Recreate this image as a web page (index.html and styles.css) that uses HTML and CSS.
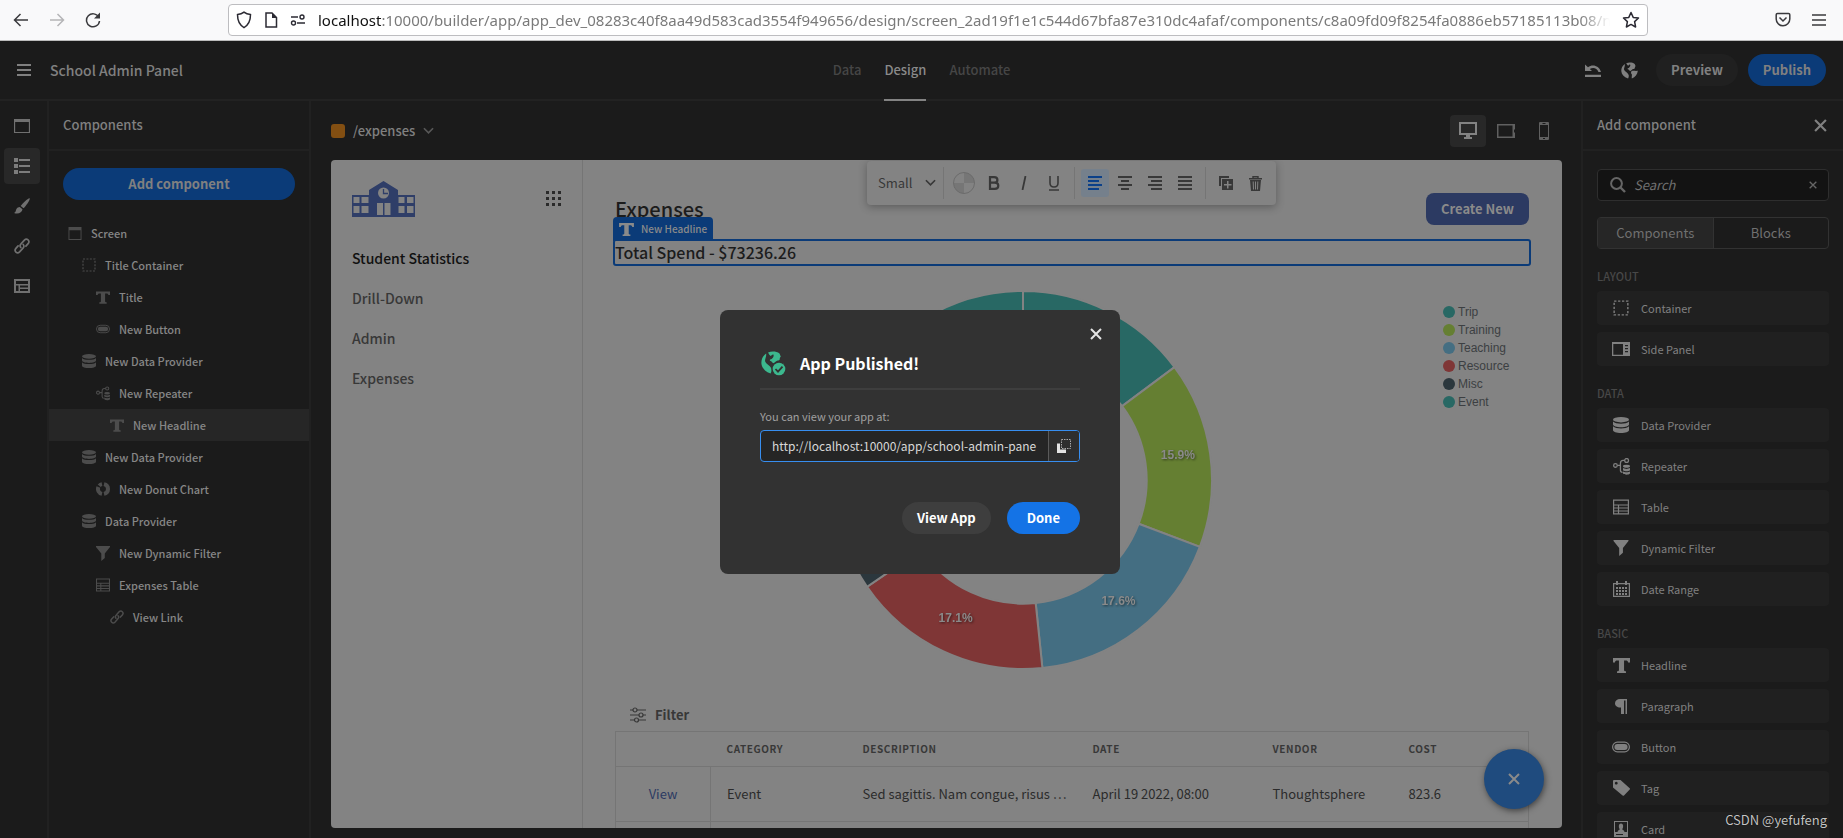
FILE: index.html
```html
<!DOCTYPE html>
<html lang="en">
<head>
<meta charset="utf-8">
<title>School Admin Panel</title>
<link rel="stylesheet" href="styles.css">
</head>
<body>
<svg class="sprite" aria-hidden="true">
  <symbol id="i-screen" viewBox="0 0 14 14"><path d="M0 0h14v14H0zM1 3.500v9.500h12V3.500z" fill="currentColor" fill-rule="evenodd"/></symbol>
  <symbol id="i-box" viewBox="0 0 14 14"><rect x="1" y="1" width="12" height="12" fill="none" stroke="currentColor" stroke-width="1.200" stroke-dasharray="2 1.430"/></symbol>
  <symbol id="i-text" viewBox="0 0 16 14"><path d="M0 0h16v4.200h-1.800C14 2.900 13.300 2.300 12 2.300h-1.600v8.900c0 .8.500 1.200 1.800 1.300V14H3.800v-1.500c1.300-.1 1.800-.5 1.800-1.300V2.300H4C2.700 2.300 2 2.900 1.800 4.200H0z" fill="currentColor"/></symbol>
  <symbol id="i-button" viewBox="0 0 18 12"><rect x=".6" y="1.200" width="16.800" height="9.600" rx="4.800" fill="none" stroke="currentColor" stroke-width="1.200"/><rect x="2.400" y="3" width="13.200" height="6" rx="3" fill="currentColor"/></symbol>
  <symbol id="i-data" viewBox="0 0 16 16"><g fill="currentColor"><ellipse cx="8" cy="2.700" rx="8" ry="2.700"/><path d="M0 4.500c1.500 1.700 4.500 2.200 8 2.200s6.500-.5 8-2.200v3c0 1.500-3.600 2.700-8 2.700S0 9 0 7.500zM0 9.300c1.500 1.700 4.500 2.200 8 2.200s6.500-.5 8-2.200v4c0 1.500-3.600 2.700-8 2.700s-8-1.200-8-2.700z"/></g></symbol>
  <symbol id="i-repeat" viewBox="0 0 16 16"><g fill="none" stroke="currentColor" stroke-width="1.200"><circle cx="2.300" cy="7" r="1.700"/><circle cx="12.800" cy="2.300" r="1.800"/><path d="M4 7h3M11 2.300H9.500Q7 2.300 7 5v6.500q0 2 2 2"/></g><g fill="currentColor"><ellipse cx="12.700" cy="7.800" rx="3.300" ry="1.400"/><path d="M9.400 9.500c1.500 1 5 1 6.600 0v2c-1.500 1.200-5 1.200-6.600 0zM9.400 12.600c1.500 1 5 1 6.600 0v2c-1.500 1.500-5 1.500-6.600 0z"/></g></symbol>
  <symbol id="i-donut" viewBox="0 0 14 14"><g fill="none" stroke="currentColor" stroke-width="4"><path d="M8 2.100a5 5 0 0 1 0 9.800"/><path d="M6 11.900A5 5 0 0 1 2.400 5"/><path d="M3.200 3.700A5 5 0 0 1 6 2.100"/></g></symbol>
  <symbol id="i-funnel" viewBox="0 0 14 15"><path d="M0 0h14v1L8.800 7.500V12L5.300 15V7.500L0 1z" fill="currentColor"/></symbol>
  <symbol id="i-table" viewBox="0 0 16 15"><path d="M.6.6h14.800v13.800H.6zM.6 5.500h14.800M.6 8.500h14.800M.6 11.500h14.800M5.500 5.500v9" fill="none" stroke="currentColor" stroke-width="1.200"/></symbol>
  <symbol id="i-link" viewBox="0 0 16 16"><g fill="none" stroke="currentColor" stroke-width="1.700" stroke-linecap="round"><path d="M6.800 9.500c-1-1.200-.8-2.600.2-3.600l3.400-3.800c2.500-2.400 6 .8 3.700 3.500l-2.200 2.500"/><path d="M9.200 6.500c1 1.200.8 2.600-.2 3.600l-3.400 3.800c-2.500 2.400-6-.8-3.700-3.500l2.200-2.500"/></g></symbol>
  <symbol id="i-panel" viewBox="0 0 18 14"><path d="M0 0h18v14H0zM1.300 2v10.700H11V2zM13 3v1.200h3V3zM13 6v1.200h3V6zM13 9v1.200h3V9z" fill="currentColor" fill-rule="evenodd"/></symbol>
  <symbol id="i-calendar" viewBox="0 0 17 16"><path d="M.6 2.600h15.800v12.800H.6z" fill="none" stroke="currentColor" stroke-width="1.200"/><path d="M4 0v4M13 0v4" stroke="currentColor" stroke-width="2"/><path d="M3 7h11M3 10h11M3 13h11" stroke="currentColor" stroke-width="2" stroke-dasharray="2 1"/></symbol>
  <symbol id="i-para" viewBox="0 0 12 15"><path d="M5 0h7v15h-1.500V1.500H9V15H6V8.500C2.500 8.800 0 7 0 4.300S2.200 0 5 0z" fill="currentColor"/></symbol>
  <symbol id="i-tag" viewBox="0 0 17 16"><path d="M0 1Q0 0 1 0h6.500l9.200 8.200q.6.700 0 1.300L11 15.500q-.7.600-1.400 0L0 7.500zM3.200 1.800a1.400 1.400 0 1 0 .1 0z" fill="currentColor" fill-rule="evenodd"/></symbol>
  <symbol id="i-card" viewBox="0 0 14 16"><path d="M0 0h14v16H0zM1 1v10h2.500C3.500 9.500 5.500 9 5.800 8.300 4.500 6.500 4.300 2.500 7 2.500s2.500 4 1.200 5.800C8.500 9 10.500 9.500 10.500 11H13V1zM2 13v1h7v-1z" fill="currentColor" fill-rule="evenodd"/></symbol>
  <symbol id="i-cross" viewBox="0 0 12 12"><path d="M1 1l10 10M11 1L1 11" fill="none" stroke="currentColor" stroke-width="2"/></symbol>
  <symbol id="i-chevron" viewBox="0 0 12 8"><path d="M1 1l5 5 5-5" fill="none" stroke="currentColor" stroke-width="1.800"/></symbol>
  <symbol id="i-globe" viewBox="0 0 18 18"><path d="M4 2C1.500 3.800.2 6.500.3 9.500.6 13 3 16 7.500 17.600c.8-1.600 1-3.100.5-4.100C7 11 4 10.500 3.200 8 3 6 4.500 4.500 4 2zM5.500 1.200C8.500 0 12 .2 14.500 2l1 2.500c-1.500 1 0 2.500-2 3-1.500-.5-2.500 2-4 2L8 8c-1.500-.2-1.500-1.500.3-1.700 1.200-1.300 2.200-2.300 1.200-3.800L7.500 4l-1-1zM11 9.800c2-1 4 0 6.800-.5C17.500 13 15 16 11.500 17.500c-.5-2.500 1-4-1-5.500z" fill="currentColor"/></symbol>
</svg>

<div class="browser">
  <div class="browser-nav">
    <button class="plain" aria-label="Back"><svg width="16" height="16" viewBox="0 0 16 16"><path d="M15 8H2M7.500 2L1.500 8l6 6" fill="none" stroke="#3a3a3d" stroke-width="1.500"/></svg></button>
    <button class="plain" aria-label="Forward"><svg width="16" height="16" viewBox="0 0 16 16"><path d="M1 8h13M8.500 2l6 6-6 6" fill="none" stroke="#b5b5b7" stroke-width="1.500"/></svg></button>
    <button class="plain" aria-label="Reload"><svg width="16" height="16" viewBox="0 0 16 16"><path d="M13.800 5.300A6.500 6.500 0 1 0 14.500 9" fill="none" stroke="#3a3a3d" stroke-width="1.500"/><path d="M15 .5v6H9z" fill="#3a3a3d"/></svg></button>
  </div>
  <div class="address">
    <svg width="16" height="18" viewBox="0 0 16 18"><path d="M8 1.200c2 1.600 4.300 2.200 6.500 2.400 0 5.500-1 10-6.500 13-5.500-3-6.500-7.500-6.500-13C3.700 3.400 6 2.800 8 1.200z" fill="none" stroke="#2b2a33" stroke-width="1.500"/></svg>
    <svg width="14" height="16" viewBox="0 0 14 16"><path d="M2 1h6l4.500 4.500V15H2z" fill="none" stroke="#2b2a33" stroke-width="1.500"/><path d="M8 1v5h5z" fill="#2b2a33"/></svg>
    <svg width="16" height="12" viewBox="0 0 16 12"><g fill="none" stroke="#2b2a33" stroke-width="1.400"><path d="M1 3h7M7 9h8"/><circle cx="12" cy="3" r="2"/><circle cx="3.500" cy="9" r="2"/></g></svg>
    <div class="url"><b>localhost</b>:10000/builder/app/app_dev_08283c40f8aa49d583cad3554f949656/design/screen_2ad19f1e1c544d67bfa87e310dc4afaf/components/c8a09fd09f8254fa0886eb57185113b08/n</div>
    <svg width="18" height="18" viewBox="0 0 18 18"><path d="M9 1.500l2.200 4.900 5.300.6-3.900 3.600 1 5.400L9 13.400 4.400 16l1-5.400L1.500 7l5.300-.6z" fill="none" stroke="#2b2a33" stroke-width="1.500" stroke-linejoin="round"/></svg>
  </div>
  <div class="browser-end">
    <svg width="16" height="16" viewBox="0 0 16 16"><path d="M2.500 1.500h11q1.300 0 1.300 1.300V7a6.800 6.800 0 0 1-13.600 0V2.800q0-1.300 1.300-1.300zM4.500 5.500L8 9l3.500-3.500" fill="none" stroke="#3a3a3d" stroke-width="1.500"/></svg>
    <svg width="14" height="14" viewBox="0 0 14 14"><path d="M0 2h14M0 7h14M0 12h14" stroke="#3a3a3d" stroke-width="1.500"/></svg>
  </div>
</div>

<div class="app">
  <header class="topbar">
    <div class="brand">
      <svg width="14" height="14" viewBox="0 0 14 14"><path d="M0 2h14M0 7h14M0 12h14" stroke="currentColor" stroke-width="2"/></svg>
      <h1>School Admin Panel</h1>
    </div>
    <nav class="modes"><a href="#">Data</a><a href="#" class="on">Design</a><a href="#">Automate</a></nav>
    <div class="top-actions">
      <svg width="16" height="14" viewBox="0 0 16 14"><path d="M0 1.500V8h7L4.800 6C8 4 12 5 13.500 9H16C14 2.500 7.500 1 3 4.200zM0 11.700h16V14H0z" fill="currentColor"/></svg>
      <svg class="globe" width="17" height="17"><use href="#i-globe"/></svg>
      <button class="pill quiet">Preview</button>
      <button class="pill cta">Publish</button>
    </div>
  </header>

  <div class="workspace">
    <nav class="rail">
      <button aria-label="Screens"><svg width="16" height="14" viewBox="0 0 14 14" preserveAspectRatio="none"><path d="M0 0h14v14H0zM1 3v10h12V3z" fill="currentColor" fill-rule="evenodd"/></svg></button>
      <button class="on" aria-label="Components"><svg width="16" height="16" viewBox="0 0 16 16"><path d="M0 0h4v4H0zM5 1h11v2H5zM0 6h4v4H0zM5 7h11v2H5zM0 12h4v4H0zM5 13h11v2H5z" fill="currentColor"/></svg></button>
      <button aria-label="Theme"><svg width="16" height="16" viewBox="0 0 16 16"><path d="M15.700.3c.8 1-3.700 7.700-6.200 10L6.700 8C8.500 5.500 14.500-.5 15.700.3zM5.800 9l2.700 2.300C8 14.500 4.500 16.500 0 15c2-.8 1.500-2 2.300-3.700C3 9.800 4.500 9 5.800 9z" fill="currentColor"/></svg></button>
      <button aria-label="Navigation"><svg width="16" height="16"><use href="#i-link"/></svg></button>
      <button aria-label="Layouts"><svg width="16" height="14" viewBox="0 0 16 14"><path d="M0 0h16v14H0zM2 2v3h12V2zM2 6.500V12h2.500V6.500zM6 6.500v2h8v-2zM6 10v2h8v-2z" fill="currentColor" fill-rule="evenodd"/></svg></button>
    </nav>

    <aside class="components">
      <h2 class="panel-title">Components</h2>
      <div class="add-wrap"><button class="pill cta wide">Add component</button></div>
      <ul class="tree">
        <li class="l0"><svg width="14" height="13"><use href="#i-screen"/></svg>Screen</li>
        <li class="l1"><svg width="14" height="14"><use href="#i-box"/></svg>Title Container</li>
        <li class="l2"><svg width="15" height="13"><use href="#i-text"/></svg>Title</li>
        <li class="l2"><svg width="16" height="12"><use href="#i-button"/></svg>New Button</li>
        <li class="l1"><svg width="14" height="14"><use href="#i-data"/></svg>New Data Provider</li>
        <li class="l2"><svg width="15" height="15"><use href="#i-repeat"/></svg>New Repeater</li>
        <li class="l3 on"><svg width="15" height="13"><use href="#i-text"/></svg>New Headline</li>
        <li class="l1"><svg width="14" height="14"><use href="#i-data"/></svg>New Data Provider</li>
        <li class="l2"><svg width="14" height="14"><use href="#i-donut"/></svg>New Donut Chart</li>
        <li class="l1"><svg width="14" height="14"><use href="#i-data"/></svg>Data Provider</li>
        <li class="l2"><svg width="14" height="15"><use href="#i-funnel"/></svg>New Dynamic Filter</li>
        <li class="l2"><svg width="15" height="14"><use href="#i-table"/></svg>Expenses Table</li>
        <li class="l3"><svg width="14" height="14"><use href="#i-link"/></svg>View Link</li>
      </ul>
    </aside>

    <main class="stage">
      <div class="stage-bar">
        <button class="route"><span class="swatch"></span>/expenses<svg width="11" height="8"><use href="#i-chevron"/></svg></button>
        <div class="devices">
          <button class="on" aria-label="Desktop"><svg width="18" height="17" viewBox="0 0 18 17"><path d="M0 0h18v13h-7v2h2v2H5v-2h2v-2H0zM2 2v9h14V2z" fill="currentColor" fill-rule="evenodd"/></svg></button>
          <button aria-label="Tablet"><svg width="18" height="14" viewBox="0 0 18 14"><path d="M0 0h18v5.500h-1v3h1V14H0zM1.500 1.500v11h14v-11z" fill="currentColor" fill-rule="evenodd"/></svg></button>
          <button aria-label="Mobile"><svg width="10" height="18" viewBox="0 0 10 18"><path d="M1 0h8q1 0 1 1v16q0 1-1 1H1q-1 0-1-1V1q0-1 1-1zM1 3v12h8V3zM3.500 1v1h3V1zM4 16v1h2v-1z" fill="currentColor" fill-rule="evenodd"/></svg></button>
        </div>
      </div>

      <div class="preview">
        <nav class="site-nav">
          <div class="site-top">
            <svg width="63" height="36" viewBox="0 0 63 36"><path d="M0 14h17V9L31.500 0 46 9v5h17v22H0z" fill="#2f3e68"/><circle cx="31.500" cy="12" r="5.500" fill="#838383"/><path d="M31.500 8v4.500H36" fill="none" stroke="#2f3e68" stroke-width="1.300"/><path d="M25 22h6v12h-6zM32.500 22h6v12h-6zM1.500 16h6v6h-6zM9.500 16h7v6h-7zM1.500 25h6v7h-6zM9.500 25h7v7h-7zM46.500 16h6v6h-6zM55 16h6.500v6H55zM46.500 25h6v7h-6zM55 25h6.500v7H55z" fill="#838383"/></svg>
            <svg width="15" height="15" viewBox="0 0 15 15"><path d="M0 1.500h15M0 7.500h15M0 13.500h15" stroke="#2a2a2a" stroke-width="3" stroke-dasharray="3 3"/></svg>
          </div>
          <a href="#" class="on">Student Statistics</a>
          <a href="#">Drill-Down</a>
          <a href="#">Admin</a>
          <a href="#">Expenses</a>
        </nav>

        <section class="site-main">
          <div class="title-row"><h2>Expenses</h2><button class="create">Create New</button></div>
          <div class="headline">
            <span class="tag"><svg width="15" height="13"><use href="#i-text"/></svg>New Headline</span>
            Total Spend - $73236.26
          </div>
          <div class="chart">
            <svg width="376" height="376" viewBox="-187 -187 374 374">
              <g stroke="#838383" stroke-width="2">
                <path fill="#286864" d="M0-188A188 188 0 0 1 150.700-112.300L98.600-73.500A123 123 0 0 0 0-123z"/>
                <path fill="#657f32" d="M150.700-112.300A188 188 0 0 1 175.900 66.500L115.100 43.500A123 123 0 0 0 98.600-73.500z"/>
                <path fill="#446e82" d="M175.900 66.500A188 188 0 0 1 19.300 187L12.600 122.300A123 123 0 0 0 115.100 43.500z"/>
                <path fill="#7f3636" d="M19.300 187A188 188 0 0 1-155.100 106.200L-101.500 69.500A123 123 0 0 0 12.600 122.300z"/>
                <path fill="#2b373d" d="M-155.100 106.200A188 188 0 0 1-167.500-85.400L-109.600-55.800A123 123 0 0 0-101.500 69.500z"/>
                <path fill="#286864" d="M-167.500-85.400A188 188 0 0 1 0-188V-123A123 123 0 0 0-109.600-55.800z"/>
              </g>
              <g class="slice-labels"><text x="154" y="-21">15.9%</text><text x="95" y="124">17.6%</text><text x="-67" y="141">17.1%</text></g>
            </svg>
            <ul class="legend">
              <li><i class="c-teal"></i>Trip</li>
              <li><i class="c-green"></i>Training</li>
              <li><i class="c-blue"></i>Teaching</li>
              <li><i class="c-red"></i>Resource</li>
              <li><i class="c-slate"></i>Misc</li>
              <li><i class="c-teal"></i>Event</li>
            </ul>
          </div>
          <button class="filter"><svg width="16" height="16" viewBox="0 0 16 16"><g fill="none" stroke="currentColor" stroke-width="1.200"><path d="M0 3h3M7 3h9M0 8h9M13 8h3M0 13h4.500M8.500 13H16"/><circle cx="5" cy="3" r="2"/><circle cx="11" cy="8" r="2"/><circle cx="6.500" cy="13" r="2"/></g></svg>Filter</button>
          <table>
            <colgroup><col class="w-view"><col class="w-s"><col class="w-l"><col class="w-m"><col class="w-s"><col></colgroup>
            <thead><tr><th></th><th>Category</th><th>Description</th><th>Date</th><th>Vendor</th><th>Cost</th></tr></thead>
            <tbody>
              <tr><td><a href="#">View</a></td><td>Event</td><td>Sed sagittis. Nam congue, risus …</td><td>April 19 2022, 08:00</td><td>Thoughtsphere</td><td>823.6</td></tr>
              <tr><td></td><td></td><td></td><td></td><td></td><td></td></tr>
            </tbody>
          </table>
        </section>

        <div class="toolbar">
          <button class="size">Small<svg width="11" height="8"><use href="#i-chevron"/></svg></button>
          <div class="group">
            <button aria-label="Colour"><svg width="22" height="22" viewBox="0 0 22 22"><circle cx="11" cy="11" r="10.500" fill="#838383"/><path d="M11 11V.5A10.500 10.500 0 0 1 21.500 11zM11 11v10.500A10.500 10.500 0 0 1 .5 11z" fill="#767676"/><circle cx="11" cy="11" r="10.500" fill="none" stroke="#6c6c6c"/></svg></button>
            <button aria-label="Bold"><svg width="12" height="14" viewBox="0 0 12 14"><path d="M2 1.200h4.200c4.300 0 4.300 5.400 0 5.400H2h4.700c4.800 0 4.800 6.200 0 6.200H2z" fill="none" stroke="currentColor" stroke-width="2.200"/></svg></button>
            <button aria-label="Italic"><svg width="8" height="14" viewBox="0 0 8 14"><path d="M5.500 0L2.500 14" stroke="currentColor" stroke-width="1.800"/></svg></button>
            <button aria-label="Underline"><svg width="12" height="15" viewBox="0 0 12 15"><path d="M2 0v7q0 4 4 4t4-4V0M1 14h10" fill="none" stroke="currentColor" stroke-width="1.600"/></svg></button>
          </div>
          <div class="group">
            <button class="on" aria-label="Align left"><svg width="14" height="14" viewBox="0 0 14 14"><path d="M0 1h14M0 5h11M0 9h14M0 13h11" stroke="currentColor" stroke-width="1.800"/></svg></button>
            <button aria-label="Align centre"><svg width="14" height="14" viewBox="0 0 14 14"><path d="M0 1h14M3 5h8M0 9h14M3 13h8" stroke="currentColor" stroke-width="1.800"/></svg></button>
            <button aria-label="Align right"><svg width="14" height="14" viewBox="0 0 14 14"><path d="M0 1h14M3 5h11M0 9h14M3 13h11" stroke="currentColor" stroke-width="1.800"/></svg></button>
            <button aria-label="Justify"><svg width="14" height="14" viewBox="0 0 14 14"><path d="M0 1h14M0 5h14M0 9h14M0 13h14" stroke="currentColor" stroke-width="1.800"/></svg></button>
          </div>
          <div class="group">
            <button aria-label="Duplicate"><svg width="14" height="14" viewBox="0 0 14 14"><path d="M0 0h10v2H2v8H0zM3 3h11v11H3zM8 5v3H5v1.500h3v3h1.500v-3h3V8h-3V5z" fill="currentColor" fill-rule="evenodd"/></svg></button>
            <button aria-label="Delete"><svg width="13" height="15" viewBox="0 0 13 15"><path d="M4 2V.7h5V2M0 2.700h13" fill="none" stroke="currentColor" stroke-width="1.400"/><path d="M1 4h11l-1 11H2zM3.700 5.500l.3 8h1l-.3-8zM6 5.500v8h1v-8zM8.300 5.500l-.3 8h1l.3-8z" fill="currentColor" fill-rule="evenodd"/></svg></button>
          </div>
        </div>
        <button class="fab" aria-label="Close help"><svg width="12" height="12"><use href="#i-cross"/></svg></button>
      </div>
    </main>

    <aside class="library">
      <h2 class="panel-title">Add component<svg width="13" height="13"><use href="#i-cross"/></svg></h2>
      <div class="library-body">
        <div class="search">
          <svg width="16" height="16" viewBox="0 0 16 16"><circle cx="6.500" cy="6.500" r="5.400" fill="none" stroke="currentColor" stroke-width="2"/><path d="M10.500 10.500L15 15" stroke="currentColor" stroke-width="2.400"/></svg>
          <input type="text" placeholder="Search" aria-label="Search">
          <svg width="8" height="8"><use href="#i-cross"/></svg>
        </div>
        <div class="switch"><button class="on">Components</button><button>Blocks</button></div>
        <h3>Layout</h3>
        <ul>
          <li><span><svg width="16" height="16"><use href="#i-box"/></svg></span>Container</li>
          <li><span><svg width="18" height="14"><use href="#i-panel"/></svg></span>Side Panel</li>
        </ul>
        <h3>Data</h3>
        <ul>
          <li><span><svg width="16" height="16"><use href="#i-data"/></svg></span>Data Provider</li>
          <li><span><svg width="17" height="17"><use href="#i-repeat"/></svg></span>Repeater</li>
          <li><span><svg width="16" height="16"><use href="#i-table"/></svg></span>Table</li>
          <li><span><svg width="16" height="16"><use href="#i-funnel"/></svg></span>Dynamic Filter</li>
          <li><span><svg width="17" height="16"><use href="#i-calendar"/></svg></span>Date Range</li>
        </ul>
        <h3>Basic</h3>
        <ul>
          <li><span><svg width="17" height="15"><use href="#i-text"/></svg></span>Headline</li>
          <li><span><svg width="12" height="15"><use href="#i-para"/></svg></span>Paragraph</li>
          <li><span><svg width="18" height="12"><use href="#i-button"/></svg></span>Button</li>
          <li><span><svg width="17" height="16"><use href="#i-tag"/></svg></span>Tag</li>
          <li><span><svg width="14" height="16"><use href="#i-card"/></svg></span>Card</li>
        </ul>
      </div>
    </aside>
  </div>

  <div class="backdrop">
    <div class="dialog" role="dialog" aria-labelledby="dialog-title">
      <button class="dialog-close" aria-label="Close"><svg width="12" height="12"><use href="#i-cross"/></svg></button>
      <div class="dialog-head">
        <svg class="published" width="26" height="26" viewBox="0 0 26 26"><use href="#i-globe" x="1" y="1" width="23" height="23"/><circle cx="19" cy="19" r="7.500" fill="#323232"/><circle cx="19" cy="19" r="6.300" fill="currentColor"/><path d="M15.500 19l2.500 2.700 4.500-5" fill="none" stroke="#323232" stroke-width="1.800"/></svg>
        <h2 id="dialog-title">App Published!</h2>
      </div>
      <label for="app-url">You can view your app at:</label>
      <div class="copy-field">
        <input id="app-url" type="text" value="http://localhost:10000/app/school-admin-pane">
        <button aria-label="Copy"><svg width="14" height="14" viewBox="0 0 14 14"><path d="M0 4.500h3v6h6v3.500H0z" fill="#e3e3e3"/><rect x="4.500" y=".5" width="9" height="9" fill="none" stroke="#a9a9a9" stroke-dasharray="1.500 1"/></svg></button>
      </div>
      <div class="dialog-actions"><button class="pill">View App</button><button class="pill done">Done</button></div>
    </div>
  </div>
  <div class="credit">CSDN @yefufeng</div>
</div>
</body>
</html>
```
FILE: styles.css
```css
* { box-sizing: border-box; }
body, h1, h2, h3, ul { margin: 0; padding: 0; }
ul { list-style: none; }
body {
  height: 100vh;
  display: flex;
  flex-direction: column;
  overflow: hidden;
  background: #1b1b1b;
  color: #808080;
  font: 12px/16px "Noto Sans CJK SC", "Noto Sans", sans-serif;
}
a { color: inherit; text-decoration: none; }
button { background: none; border: 0; padding: 0; margin: 0; color: inherit; font: inherit; display: flex; align-items: center; justify-content: center; }
input { font: inherit; color: inherit; background: none; border: 0; outline: 0; padding: 0; min-width: 0; }
svg { display: block; flex: none; }
.sprite { position: absolute; width: 0; height: 0; }

/* Browser chrome */
.browser { height: 41px; flex: none; display: flex; align-items: center; background: #f9f9fa; border-bottom: 1px solid #bcbcbc; }
.browser-nav { width: 228px; flex: none; display: flex; gap: 20px; padding-left: 13px; }
.address { flex: 1; min-width: 0; height: 32px; display: flex; align-items: center; gap: 12px; padding: 0 7px; background: #fff; border: 1px solid #bdbdc0; border-radius: 4px; }
.url { flex: 1; min-width: 0; overflow: hidden; white-space: nowrap; font: 15px/24px "Noto Sans", sans-serif; color: #7a7a7a; mask-image: linear-gradient(to left, transparent, #000 30px); }
.url b { font-weight: 400; color: #111; }
.browser-end { width: 195px; flex: none; display: flex; justify-content: flex-end; align-items: center; gap: 21px; padding-right: 17px; }

/* Top bar */
.app { flex: 1; min-height: 0; display: flex; flex-direction: column; position: relative; }
.topbar { height: 60px; flex: none; display: grid; grid-template-columns: 1fr auto 1fr; border-bottom: 2px solid #222; }
.brand { display: flex; align-items: center; gap: 19px; padding-left: 17px; }
.brand h1 { font-size: 14px; line-height: 20px; font-weight: 500; }
.modes { display: flex; gap: 23px; margin-bottom: -2px; font-size: 13px; font-weight: 500; color: #464646; }
.modes a { display: flex; align-items: center; border-bottom: 2px solid transparent; }
.modes .on { color: #8a8a8a; border-color: #838383; }
.top-actions { display: flex; align-items: center; justify-content: flex-end; padding-right: 17px; }
.globe { margin: 0 18px 0 20px; }
.pill { height: 32px; padding: 0 15px; border-radius: 16px; font-size: 13px; font-weight: 700; }
.quiet { background: #202020; margin-right: 10px; }
.cta { background: #0b3b78; }

/* Columns */
.workspace { flex: 1; min-height: 0; display: flex; }
.rail { width: 49px; flex: none; display: flex; flex-direction: column; gap: 4px; padding: 7px 4px; border-right: 2px solid #212121; color: #707070; }
.rail button { width: 36px; height: 36px; border-radius: 4px; }
.rail .on { background: #282828; color: #7c7c7c; }
.components { width: 262px; flex: none; border-right: 2px solid #212121; }
.panel-title { height: 50px; display: flex; align-items: center; justify-content: space-between; padding: 0 16px 0 14px; border-bottom: 2px solid #212121; font-size: 13px; font-weight: 500; }
.add-wrap { padding: 17px 14px 17px; }
.wide { width: 100%; }
.tree li { height: 32px; display: flex; align-items: center; gap: 9px; font-size: 11px; font-weight: 500; color: #868686; }
.tree svg { color: #4c4c4c; width: 14px; overflow: visible; }
.tree .on { background: #262626; }
.l0 { padding-left: 19px; }
.l1 { padding-left: 33px; }
.l2 { padding-left: 47px; }
.l3 { padding-left: 61px; }

/* Stage */
.stage { flex: 1; min-width: 0; display: flex; flex-direction: column; padding: 0 19px 10px 20px; }
.stage-bar { height: 59px; flex: none; display: flex; align-items: center; justify-content: space-between; }
.route { gap: 8px; font-size: 13px; font-weight: 500; }
.route svg { color: #585858; }
.swatch { width: 14px; height: 14px; border-radius: 3px; background: #834f12; }
.devices { display: flex; gap: 2px; color: #606060; }
.devices button { width: 36px; height: 32px; border-radius: 4px; }
.devices .on { background: #282828; color: #838383; }
.preview { flex: 1; min-height: 0; display: flex; position: relative; overflow: hidden; background: #838383; border-radius: 4px; color: #2b2b2b; }

/* Site navigation */
.site-nav { width: 252px; flex: none; display: flex; flex-direction: column; align-items: flex-start; gap: 16px; padding: 21px 21px; border-right: 1px solid #757575; font-size: 14px; line-height: 24px; font-weight: 500; color: #383838; }
.site-top { align-self: stretch; display: flex; justify-content: space-between; padding-bottom: 13px; }
.site-top svg:last-child { margin-top: 10px; }
.site-nav .on { color: #111; }

/* Site content */
.site-main { flex: 1; min-width: 0; padding: 33px 33px 0 32px; }
.title-row { height: 32px; display: flex; align-items: center; justify-content: space-between; }
.title-row h2 { font-size: 20px; line-height: 32px; font-weight: 500; color: #1c1c1c; }
.create { width: 103px; height: 32px; border-radius: 8px; background: #2c3a62; color: #8a8a8a; font-size: 13px; font-weight: 700; }
.headline { position: relative; margin-top: 16px; font-size: 16px; line-height: 23px; font-weight: 500; color: #1c1c1c; outline: 2px solid #0b3b78; border-radius: 1px; }
.tag { position: absolute; left: -2px; bottom: 100%; height: 24px; display: flex; align-items: center; gap: 7px; padding: 0 6px; border-radius: 4px 4px 0 0; background: #0b3b78; color: #8a8a8a; font-size: 10px; line-height: 16px; }
.chart { display: flex; justify-content: space-between; margin-top: 28px; }
.chart > svg { margin: 0 auto; overflow: visible; }
.slice-labels { font: bold 12px "Liberation Sans", Arial, sans-serif; fill: #8a8a8a; text-anchor: middle; filter: drop-shadow(1px 1px 1px rgba(0, 0, 0, .5)); }
.legend { width: 98px; padding: 11px 0 0 12px; font: 12px/18px "Liberation Sans", Arial, sans-serif; color: #3c3f42; }
.legend li { display: flex; align-items: center; gap: 3px; }
.legend i { width: 12px; height: 12px; border-radius: 50%; }
.c-teal { background: #286864; }
.c-green { background: #657f32; }
.c-blue { background: #446e82; }
.c-red { background: #7f3636; }
.c-slate { background: #2b373d; }
.filter { height: 32px; margin-top: 31px; margin-left: 15px; gap: 9px; font-size: 13px; font-weight: 700; color: #383838; }
table { width: 100%; table-layout: fixed; border-collapse: collapse; border: 1px solid #757575; font-size: 13px; }
th, td { padding: 0 16px; text-align: left; white-space: nowrap; border-bottom: 1px solid #757575; }
th { height: 35px; font-size: 10px; letter-spacing: .06em; text-transform: uppercase; color: #383838; }
td { height: 55px; }
td:first-child { text-align: center; border-right: 1px solid #757575; color: #2c3a62; }
.w-view { width: 95px; }
.w-s { width: 136px; }
.w-m { width: 180px; }
.w-l { width: 230px; }

/* Floating toolbar */
.toolbar { position: absolute; top: 1px; left: 536px; height: 44px; display: flex; align-items: center; padding-left: 11px; background: #838383; border-radius: 4px; box-shadow: 0 2px 8px rgba(0, 0, 0, .3); color: #383838; }
.size { gap: 12px; padding-right: 7px; font-size: 13px; }
.group { display: flex; gap: 2px; padding: 2px 6px; border-left: 1px solid #757575; }
.group button { width: 28px; height: 28px; border-radius: 3px; }
.group .on { background: #75808c; color: #0b4089; }
.fab { position: absolute; right: 18px; bottom: 19px; width: 60px; height: 60px; border-radius: 50%; background: #1f4b7e; color: #8a8a8a; box-shadow: 1px 2px 6px rgba(0, 0, 0, .5); }

/* Component library */
.library { width: 262px; flex: none; overflow: hidden; border-left: 2px solid #212121; }
.library-body { padding: 18px 14px; }
.search { height: 32px; display: flex; align-items: center; gap: 8px; padding: 0 11px 0 12px; background: #131313; border: 1px solid #2e2e2e; border-radius: 4px; color: #666; }
.search input { flex: 1; font-size: 13px; font-style: italic; }
.search input::placeholder { color: #707070; opacity: 1; }
.switch { height: 32px; display: flex; margin-top: 16px; border: 1px solid #323232; border-radius: 4px; font-size: 13px; color: #707070; }
.switch button { flex: 1; }
.switch .on { background: #262626; border-right: 1px solid #323232; }
.library h3 { margin: 20px 0 8px; font-size: 11px; line-height: 14px; font-weight: 500; text-transform: uppercase; color: #484848; }
.library ul { display: grid; gap: 7px; }
.library li { height: 34px; display: flex; align-items: center; gap: 11px; padding-left: 15px; background: #202020; border-radius: 4px; font-size: 11px; }
.library li span { width: 18px; display: flex; justify-content: center; }

/* Dialog */
.backdrop { position: absolute; inset: 0; display: flex; align-items: center; justify-content: center; padding: 5px 3px 0 0; }
.dialog { position: relative; width: 400px; padding: 40px; background: #323232; border-radius: 8px; color: #fff; }
.dialog-close { position: absolute; top: 18px; right: 18px; color: #e3e3e3; }
.dialog-head { display: flex; align-items: center; gap: 14px; height: 40px; padding-bottom: 12px; border-bottom: 2px solid #3e3e3e; }
.dialog-head h2 { font-size: 16px; line-height: 24px; font-weight: 700; }
.published { color: #3cb88e; }
.dialog label { display: block; margin: 17px 0 5px; font-size: 11px; line-height: 18px; color: #a0a0a0; }
.copy-field { height: 32px; display: flex; border: 1px solid #378ef0; border-radius: 4px; background: #252525; color: #d8d8d8; overflow: hidden; }
.copy-field input { flex: 1; padding-left: 11px; font-size: 12px; }
.copy-field button { width: 31px; background: #2e2e2e; border-left: 1px solid #5a5a5a; }
.dialog-actions { display: flex; justify-content: flex-end; gap: 16px; margin-top: 40px; }
.dialog .pill { background: #3e3e3e; }
.dialog .done { background: #1473e6; padding: 0 20px; }
.credit { position: absolute; right: 16px; bottom: 8px; font-size: 13px; line-height: 20px; color: #c4c4c4; text-shadow: 0 0 1px #000; }
```
